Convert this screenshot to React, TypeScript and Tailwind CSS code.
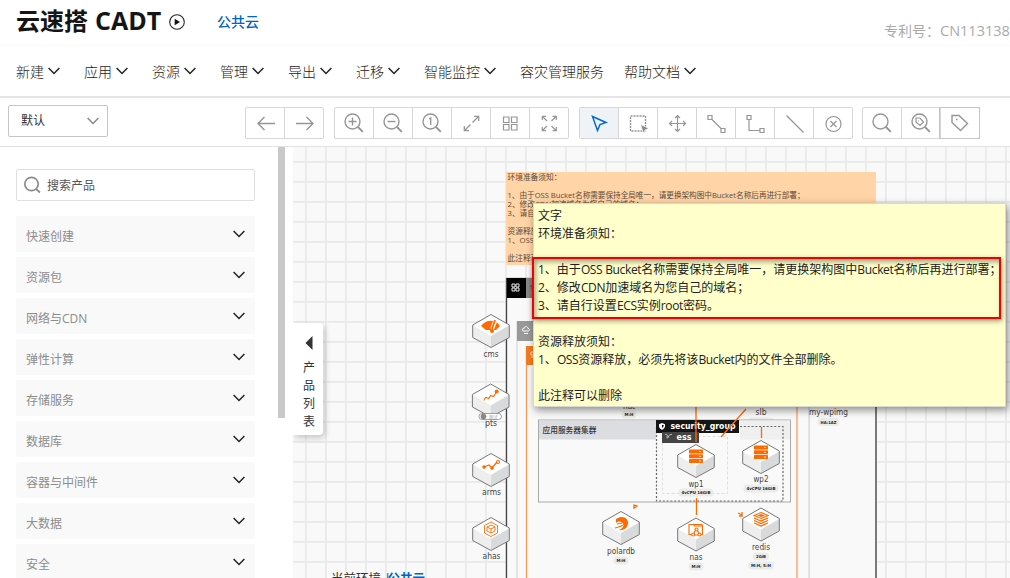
import React from "react";

const FONT = "font-['Open_Sans','Noto_Sans_CJK_SC',sans-serif]";
const SVG_FONT = "'Open Sans','Noto Sans CJK SC',sans-serif";

function Chevron({ className = "", w = 12 }: { className?: string; w?: number }) {
  return (
    <svg width={w} height={w * 0.67} viewBox="0 0 12 8" className={className} fill="none" stroke="currentColor" strokeWidth="1.5">
      <path d="M.6 1 6 6.4 11.4 1" />
    </svg>
  );
}

const menus: { label: string; w: string; arrow: boolean }[] = [
  { label: "新建", w: "w-[68px]", arrow: true },
  { label: "应用", w: "w-[68px]", arrow: true },
  { label: "资源", w: "w-[68px]", arrow: true },
  { label: "管理", w: "w-[68px]", arrow: true },
  { label: "导出", w: "w-[68px]", arrow: true },
  { label: "迁移", w: "w-[68px]", arrow: true },
  { label: "智能监控", w: "w-[96px]", arrow: true },
  { label: "容灾管理服务", w: "w-[104px]", arrow: false },
  { label: "帮助文档", w: "w-[96px]", arrow: true },
];

function Header() {
  return (
    <header className="h-[98px] shrink-0 border-b-2 border-[#e5e5e5] bg-white">
      <div className="flex h-[46px] items-start border-b border-[#fafafa] pl-4">
        <h1 className="flex h-[42px] items-center text-[24px] font-bold text-[#151515]">
          <span className="w-[79px]">云速搭</span>
          <span className="w-[74px] text-[25px]">CADT</span>
        </h1>
        <svg width="16" height="16" viewBox="0 0 16 16" className="mt-[14px]">
          <circle cx="8" cy="8" r="7.3" fill="none" stroke="#222" strokeWidth="1.1" />
          <path d="M5.7 4.7 11 8l-5.300 3.300z" fill="#111" />
        </svg>
        <span className="ml-8 mt-[12px] text-[14px] leading-5 font-medium text-[#0064c8]">公共云</span>
        <span className="ml-auto mt-[21px] w-[126px] shrink-0 overflow-hidden text-[14px] leading-5 whitespace-nowrap text-[#aaa]">
          <span className="inline-block w-[56px]">专利号：</span>
          <span className="text-[14.500px]">CN113138</span>
        </span>
      </div>
      <nav className="flex h-[50px] items-center pl-4 text-[14px] font-light text-[#222]">
        {menus.map((m) => (
          <span key={m.label} className={`flex shrink-0 items-center ${m.w}`}>
            {m.label}
            {m.arrow && <Chevron className="ml-1 text-[#222]" />}
          </span>
        ))}
      </nav>
    </header>
  );
}

const lens = (
  <>
    <circle cx="9.500" cy="9.500" r="7.500" />
    <path d="m15 15 4.800 4.800" strokeWidth="1.900" />
  </>
);

const groups: { ml: string; icons: React.ReactNode[] }[] = [
  {
    ml: "ml-[137px]",
    icons: [
      <path d="M21 11.500H4m6.500-6.500L4 11.500l6.500 6.500" />,
      <path d="M3 11.500h17m-6.500-6.500 6.500 6.500-6.500 6.500" />,
    ],
  },
  {
    ml: "ml-[10px]",
    icons: [
      <>{lens}<path d="M5.500 9.500h8M9.500 5.500v8" /></>,
      <>{lens}<path d="M5.500 9.500h8" /></>,
      <>{lens}<path d="M8 7 9.700 6v7" /></>,
      <path strokeWidth="1.300" d="M12.500 10.500l6-6m-4.500-.2h4.700V9M10.500 12.500l-6 6m4.500.2H4.300V14" />,
      <path strokeWidth="1.200" d="M4.500 5h5.500v5.500H4.500zM12.500 5h5.500v5.500h-5.500zM4.500 12.500h5.500V18H4.500zM12.500 12.500h5.500V18h-5.500z" />,
      <path strokeWidth="1.200" d="m9 9-4.500-4.500M4.300 8V4.300H8m5.500 4.700 4.500-4.500M14.500 4.300h3.800V8M9 14l-4.500 4.500M4.300 15v3.700H8m5.500-4.700 4.500 4.500m-3.500.2h3.800V15" />,
    ],
  },
  {
    ml: "ml-[10px]",
    icons: [
      <path d="m4.500 4.500 13.500 6-6 2-2.500 6z" stroke="#006ad4" strokeWidth="1.500" />,
      <>
        <path d="M3.500 4h15v15h-15z" strokeDasharray="2 1" />
        <path d="m13.500 12.500 8.500 4-4 1.300-1.500 3.700z" fill="#888" stroke="#fff" strokeWidth=".7" />
      </>,
      <path strokeWidth="1.200" d="M11.500 3.500v16M3.500 11.500h16M9 6l2.500-2.500L14 6m-5 11 2.500 2.500L14 17M6 9l-2.500 2.500L6 14m11-5 2.500 2.500L17 14" />,
      <path strokeWidth="1.200" d="M3 3.500h4v4H3zM16 16.500h4v4h-4zM7 7.500l9 9" />,
      <path strokeWidth="1.200" d="M3 3.500h4v4H3zM16 16.500h4v4h-4zM5 7.500v11h11" />,
      <path strokeWidth="1.200" d="m3.500 3.500 17 17" />,
      <><circle cx="11.500" cy="12" r="7.500" strokeWidth="1.200" /><path strokeWidth="1.200" d="m8.500 9 6 6m0-6-6 6" /></>,
    ],
  },
  {
    ml: "ml-[9px]",
    icons: [
      lens,
      <>{lens}<path strokeWidth="1.200" d="M6 6h4l3.500 4-3.500 3.500L6 10zM8.500 8.500v.8" /></>,
      <><path d="M3 3.500h7l8.500 8-7 7L3 10.500z" /><path d="M7 7.500h1.500" /></>,
    ],
  },
];

function Toolbar() {
  return (
    <div className="flex h-[49px] shrink-0 items-start border-b border-[#e2e2e2] bg-white pl-2">
      <div className="mt-[7px] flex h-8 w-[100px] items-center justify-between rounded-[2px] border border-[#c2c6cc] pl-3 pr-2 text-[12px] text-[#333]">
        默认
        <Chevron className="text-[#888]" />
      </div>
      {groups.map((g, gi) => (
        <div key={gi} className={`mt-[9px] flex h-8 rounded-[2px] border border-[#d6d6d6] ${g.ml}`}>
          {g.icons.map((icon, i) => (
            <div
              key={i}
              className={`flex w-[39px] items-center justify-center first:w-[38px] ${i > 0 ? "border-l border-[#d6d6d6]" : ""} ${gi === 2 && i === 0 ? "bg-[#eff3f8]" : ""} ${gi === 3 && i === 2 ? "outline outline-[#c2c6cc]" : ""}`}
            >
              <svg width="22" height="22" viewBox="0 0 22 22" fill="none" stroke="#969696" strokeWidth="1.400">
                {icon}
              </svg>
            </div>
          ))}
        </div>
      ))}
    </div>
  );
}

const categories = ["快速创建", "资源包", "网络与CDN", "弹性计算", "存储服务", "数据库", "容器与中间件", "大数据", "安全"];

function Sidebar() {
  return (
    <aside className="flex w-[293px] shrink-0 bg-white">
      <div className="flex w-[278px] flex-col gap-[5px] overflow-hidden pl-4 pr-[23px] pt-[22px]">
        <div className="mb-[10px] flex h-8 shrink-0 items-center rounded-[2px] border border-[#e0e0e0] pl-[6px] text-[12px] text-[#555]">
          <svg width="18" height="18" viewBox="0 0 18 18" fill="none" stroke="#8c8c8c" strokeWidth="1.700">
            <circle cx="8.500" cy="8" r="6.700" />
            <path d="m13 13 4 3.500" />
          </svg>
          <span className="ml-[6px] pt-px">搜索产品</span>
        </div>
        {categories.map((c) => (
          <div key={c} className="flex h-9 shrink-0 items-center justify-between rounded-[2px] bg-[#f9f9f9] pl-[10px] pr-[10px] text-[12px] text-[#8c8c8c]">
            <span className="pt-[6px]">{c}</span>
            <Chevron className="text-[#222]" />
          </div>
        ))}
      </div>
      <div className="h-[271px] w-[7px] bg-[#c9c9c9]" />
    </aside>
  );
}

function Label({ x, y, w, children, size = 8.5, fill = "#444", bold = false }: { x: number; y: number; w: number; children: string; size?: number; fill?: string; bold?: boolean }) {
  return (
    <text x={x} y={y} fontSize={size} fill={fill} textAnchor="middle" textLength={w} lengthAdjust="spacingAndGlyphs" fontWeight={bold ? 700 : 400} fontFamily="'DejaVu Sans','Noto Sans CJK SC',sans-serif">
      {children}
    </text>
  );
}

function Badge({ x, y, w, children }: { x: number; y: number; w: number; children: string }) {
  return (
    <g>
      <rect x={x - w / 2 - 3} y={y - 4} width={w + 6} height="8" rx="4" fill="#ebebe9" />
      <Label x={x} y={y + 1.5} w={w} size={4} fill="#222" bold>{children}</Label>
    </g>
  );
}

function Node({ x, y, children }: { x: number; y: number; children?: React.ReactNode }) {
  return (
    <g transform={`translate(${x} ${y})`}>
      <path d="M0-16.500 18.300-6V6.500L0 16.500-18.300 6.500V-6z" fill="#fff" />
      <path d="M-18-5.500 0 5V16.300L-18 6.500z" fill="#eeeeee" />
      <path d="M18-5.500 0 5V16.300L18 6.500z" fill="#d9dadb" />
      <path d="M0-16.500 18.300-6V6.500L0 16.500-18.300 6.500V-6z" fill="none" stroke="#777" />
      <g fill="none" stroke="#ff6a00" strokeWidth="1.100">{children}</g>
    </g>
  );
}

function Server() {
  return (
    <g fill="#ff6a00" stroke="none">
      {[-11.5, -6.7, -1.9].map((y) => (
        <g key={y}>
          <rect x="-7" y={y} width="14" height="4" rx=".6" />
          <path d={`M3 ${y + 2}h2`} stroke="#fff" strokeWidth=".8" />
        </g>
      ))}
    </g>
  );
}

const noteLines = [
  "环境准备须知：",
  "",
  "1、由于OSS Bucket名称需要保持全局唯一，请更换架构图中Bucket名称后再进行部署；",
  "2、修改CDN加速域名为您自己的域名；",
  "3、请自行设置ECS实例root密码。",
  "",
  "资源释放须知：",
  "1、OSS资源释放，必须先将该Bucket内的文件全部删除。",
  "",
  "此注释可以删除",
];

function Diagram() {
  return (
    <svg width="717" height="431" viewBox="293 147 717 431" className="block" fontFamily={SVG_FONT}>
      <defs>
        <pattern id="grid" x="305" y="161" width="20" height="20" patternUnits="userSpaceOnUse">
          <path d="M0 .9H20M.9 0V20" stroke="#e9e9e9" strokeWidth="1.700" />
        </pattern>
      </defs>
      <rect x="293" y="147" width="717" height="431" fill="#f9f9f9" />
      <rect x="293" y="147" width="717" height="431" fill="url(#grid)" />

      <rect x="506" y="172" width="370" height="93" rx="1" fill="#ffd4a6" />
      {noteLines.map((l, i) => (
        <text key={i} x="507.500" y={180 + i * 9} fontSize="7.700" fill="#5a4a3a" {...(i === 2 ? { textLength: 297, lengthAdjust: "spacingAndGlyphs" } : {})}>{l}</text>
      ))}

      <rect x="506.500" y="278.500" width="369.500" height="310" fill="#f9f9f9" stroke="#444" strokeWidth="1.300" />
      <rect x="507" y="278" width="19" height="20" fill="#000" />
      <path d="M512 284h3v3h-3zM516 284h3v3h-3zM512 288h3v3h-3zM516 288h3v3h-3z" stroke="#fff" strokeWidth=".9" fill="none" />
      <rect x="526" y="278" width="12" height="20" fill="#888" />
      <text x="529" y="291" fontSize="8" fill="#555">专有网络</text>
      <rect x="517" y="321.500" width="292" height="270" fill="none" stroke="#cfcfcf" />
      <rect x="517" y="321" width="18" height="20" fill="#999" />
      <path d="M523 331c-1.500-2 0-3 1-2.500.5-2.500 3.500-2.500 4 0 1.500 0 2 1.500.5 2.500zm1 2.500h4" stroke="#fff" fill="none" />
      <path d="M526.500 346V590M797 346V590" stroke="#ff9a55" strokeWidth="1.300" />
      <path d="M809.500 400V590" stroke="#ddd" strokeWidth="1" />
      <rect x="526" y="346" width="10" height="19" fill="#f57c1f" />
      <path d="M531 352h3v3h-3zM531 357h3" stroke="#fff" fill="none" strokeWidth=".8" />
      <path d="M876 400V590" stroke="#777" strokeWidth="1.500" />

      <Label x={629} y={408.500} w={12}>nat</Label>
      <Badge x={629} y={414.5} w={9}>M:H</Badge>
      <Label x={761} y={415} w={11}>slb</Label>
      <Badge x={761} y={421.500} w={20}>M:H, S:G</Badge>
      <Label x={828.5} y={415} w={39}>my-wpimg</Label>
      <Badge x={828.5} y={422} w={16}>HA:1AZ</Badge>

      <rect x="538.500" y="420" width="252" height="82" fill="#f9f9f9" stroke="#aaa" />
      <rect x="539" y="420.500" width="117" height="19" fill="#dcdde0" />
      <rect x="740" y="420.500" width="50" height="19" fill="#efefef" />
      <text x="542.500" y="433" fontSize="7.700" fill="#333" fontWeight="500">应用服务器集群</text>
      <rect x="656.500" y="426.500" width="126.500" height="74.500" fill="none" stroke="#666" strokeWidth="1.200" strokeDasharray="2 1.800" />
      <rect x="662.500" y="436.500" width="65" height="57" fill="none" stroke="#dedede" strokeDasharray="3 2" />
      <rect x="656" y="420" width="83" height="13" fill="#151515" />
      <rect x="662" y="432" width="37" height="11" fill="#444" />
      <path d="M662 423l3 1.200v2.500q-.5 2-3 3.300-2.500-1.300-3-3.300v-2.500z" fill="#fff" />
      <path d="M662 425h1.800q0 2-1.800 3z" fill="#151515" />
      <path d="M665 434.500h2l2 3m3-3h-2l-3 4m-1-1.500h2" stroke="#ccc" fill="none" strokeWidth=".8" />
      <Label x={703} y={429.300} w={65} size={9} fill="#fff" bold>security_group</Label>
      <Label x={684} y={439.500} w={15} size={8.5} fill="#fff" bold>ess</Label>

      <g stroke="#ff6a00" strokeWidth="1.300" fill="none">
        <path d="M696 400v42M746 409l-25 28M761.500 427v11M696.500 498v17" />
        <path d="M634 505l3 1-3 2zM738 513l4 2m-3 1h3v-4" />
      </g>

      <Node x={491} y={331}>
        <path d="M-10-5C-5-12 5-12 9-5L5-1-5-1z" fill="#ff6a00" stroke="none" />
        <path d="M1-2 5-12" stroke="#fff" strokeWidth="4" />
        <path d="m1-2 3-9" strokeWidth="1.800" />
        <circle cx="1" cy="0" r="2" fill="#ff6a00" stroke="none" />
      </Node>
      <Label x={491} y={357} w={15}>cms</Label>
      <Node x={490.700} y={400.500}>
        <path d="m-7 0 2-3 3 1 2-3 3 1 3-5" />
        <circle cx="6" cy="-9" r="2" fill="#ff6a00" stroke="none" />
      </Node>
      <Label x={491} y={425.500} w={12}>pts</Label>
      <rect x="479" y="413.500" width="22.500" height="6" rx="3" fill="#fff" stroke="#888" strokeWidth=".8" />
      <circle cx="483.500" cy="416.500" r="2.800" fill="#888" />
      <text x="488.500" y="418.500" fontSize="4.500" fill="#999">测试</text>
      <Node x={491} y={470}>
        <path d="m-7-3 5-2L1-2 6-8" strokeWidth="1.300" />
        <circle cx="-7" cy="-3" r="1.200" fill="#ff6a00" />
        <circle cx="1" cy="-2" r="1.200" fill="#ff6a00" />
        <circle cx="7" cy="-8" r="1.500" />
      </Node>
      <Label x={491.500} y={495} w={19}>arms</Label>
      <Node x={491} y={534}>
        <path d="M0-12 6.500-8.500V-1L0 2.500-6.500-1V-8.500zM0-9l4 2v4L0-1l-4-2v-4zM-4-7 0-5l4-2M0-5v4" strokeWidth=".9" />
      </Node>
      <Label x={491.500} y={559} w={18}>ahas</Label>
      <Node x={621} y={528}>
        <path d="M-5-9C2-14 8-9 7-4 6 1 1 3-2 2c5-2 6-6 2-8-2-1-4 0-5 1z" fill="#ff6a00" stroke="none" />
        <path d="M-4-4 1-5M-6 0c3-1 5-1 8-3" />
      </Node>
      <Label x={621} y={554} w={28}>polardb</Label>
      <Badge x={621} y={560.500} w={9}>M:H</Badge>
      <Node x={696} y={534.500}>
        <path d="M-3 0h-4v-10h4.500l1 1.500H6.500V0H4M-3-10h9v2" />
        <path d="M0-5-2.500-1M1-5 3-1M-1 .5h3" />
        <circle cx="-2.800" cy="0" r="1.500" fill="#fff" /><circle cx="3.500" cy="0" r="1.500" fill="#fff" /><circle cx="0.500" cy="-5" r="1.500" fill="#fff" />
      </Node>
      <Label x={696} y={560} w={13}>nas</Label>
      <Badge x={696} y={566.500} w={9}>M:H</Badge>
      <Node x={696} y={461}><Server /></Node>
      <Label x={696} y={487} w={15}>wp1</Label>
      <Badge x={696} y={492.500} w={29}>4vCPU 16GiB</Badge>
      <Node x={761} y={457}><Server /></Node>
      <Label x={761} y={482} w={15}>wp2</Label>
      <Badge x={761} y={488.500} w={29}>4vCPU 16GiB</Badge>
      <Node x={761} y={524.500}>
        <path d="m0-12 7 3-7 3-7-3z" />
        <path d="m0-10.500 4 1.500-4 1.500-4-1.500z" fill="#ff6a00" stroke="none" />
        <path d="M-7-6.500 0-3.500l7-3M-7-4 0-1l7-3M-7-1.500 0 1.500l7-3" strokeWidth="1.300" />
      </Node>
      <Label x={761} y={550} w={18}>redis</Label>
      <Badge x={761} y={556.500} w={10}>2GiB</Badge>
      <Badge x={761} y={565.500} w={20}>M:H, S:H</Badge>
      <text x="331" y="583" fontSize="12.500" fill="#333">当前环境 |</text>
      <text x="387.500" y="583" fontSize="12.500" fontWeight="600" fill="#0064c8">公共云</text>
    </svg>
  );
}

function ProductTab() {
  return (
    <div className="absolute left-0 top-[176px] flex h-28 w-[30px] flex-col items-center rounded-r-[4px] bg-white pl-[2px] pt-[13px] text-[12px] leading-[18px] text-[#333] shadow-[2px_3px_6px_rgba(0,0,0,0.2)]">
      <svg width="8" height="14" viewBox="0 0 8 14" className="mb-[9px]"><path d="M7.500 0v14L.5 7z" fill="#333" /></svg>
      <span>产</span>
      <span>品</span>
      <span>列</span>
      <span>表</span>
    </div>
  );
}

function Tooltip() {
  return (
    <div className="absolute left-[240px] top-[56px] h-[204px] w-[473px] border border-[#d9d9d0] bg-[#ffffcb] pl-1 pt-[3px] text-[12px] leading-[18px] text-[#222] shadow-[2px_3px_8px_rgba(0,0,0,0.45)]">
      {["文字", ...noteLines].map((l, i) => (
        <p key={i} className="h-[18px] whitespace-nowrap">
          {l.split(/([A-Za-z ]+)/).map((part, j) => (
            <span key={j} className={j % 2 ? "tracking-[-0.34px]" : ""}>{part}</span>
          ))}
        </p>
      ))}
      <div className="absolute left-[-2px] top-[53px] h-[62px] w-[469px] border-2 border-[#f00000] shadow-[1px_2px_5px_rgba(0,0,0,0.4),inset_2px_3px_5px_rgba(0,0,0,0.35)]" />
    </div>
  );
}

export default function App() {
  return (
    <div className={`flex h-[578px] w-[1010px] flex-col overflow-hidden bg-white ${FONT}`}>
      <Header />
      <Toolbar />
      <div className="flex h-[431px]">
        <Sidebar />
        <main className="relative w-[717px] overflow-hidden">
          <Diagram />
          <ProductTab />
          <Tooltip />
        </main>
      </div>
    </div>
  );
}
